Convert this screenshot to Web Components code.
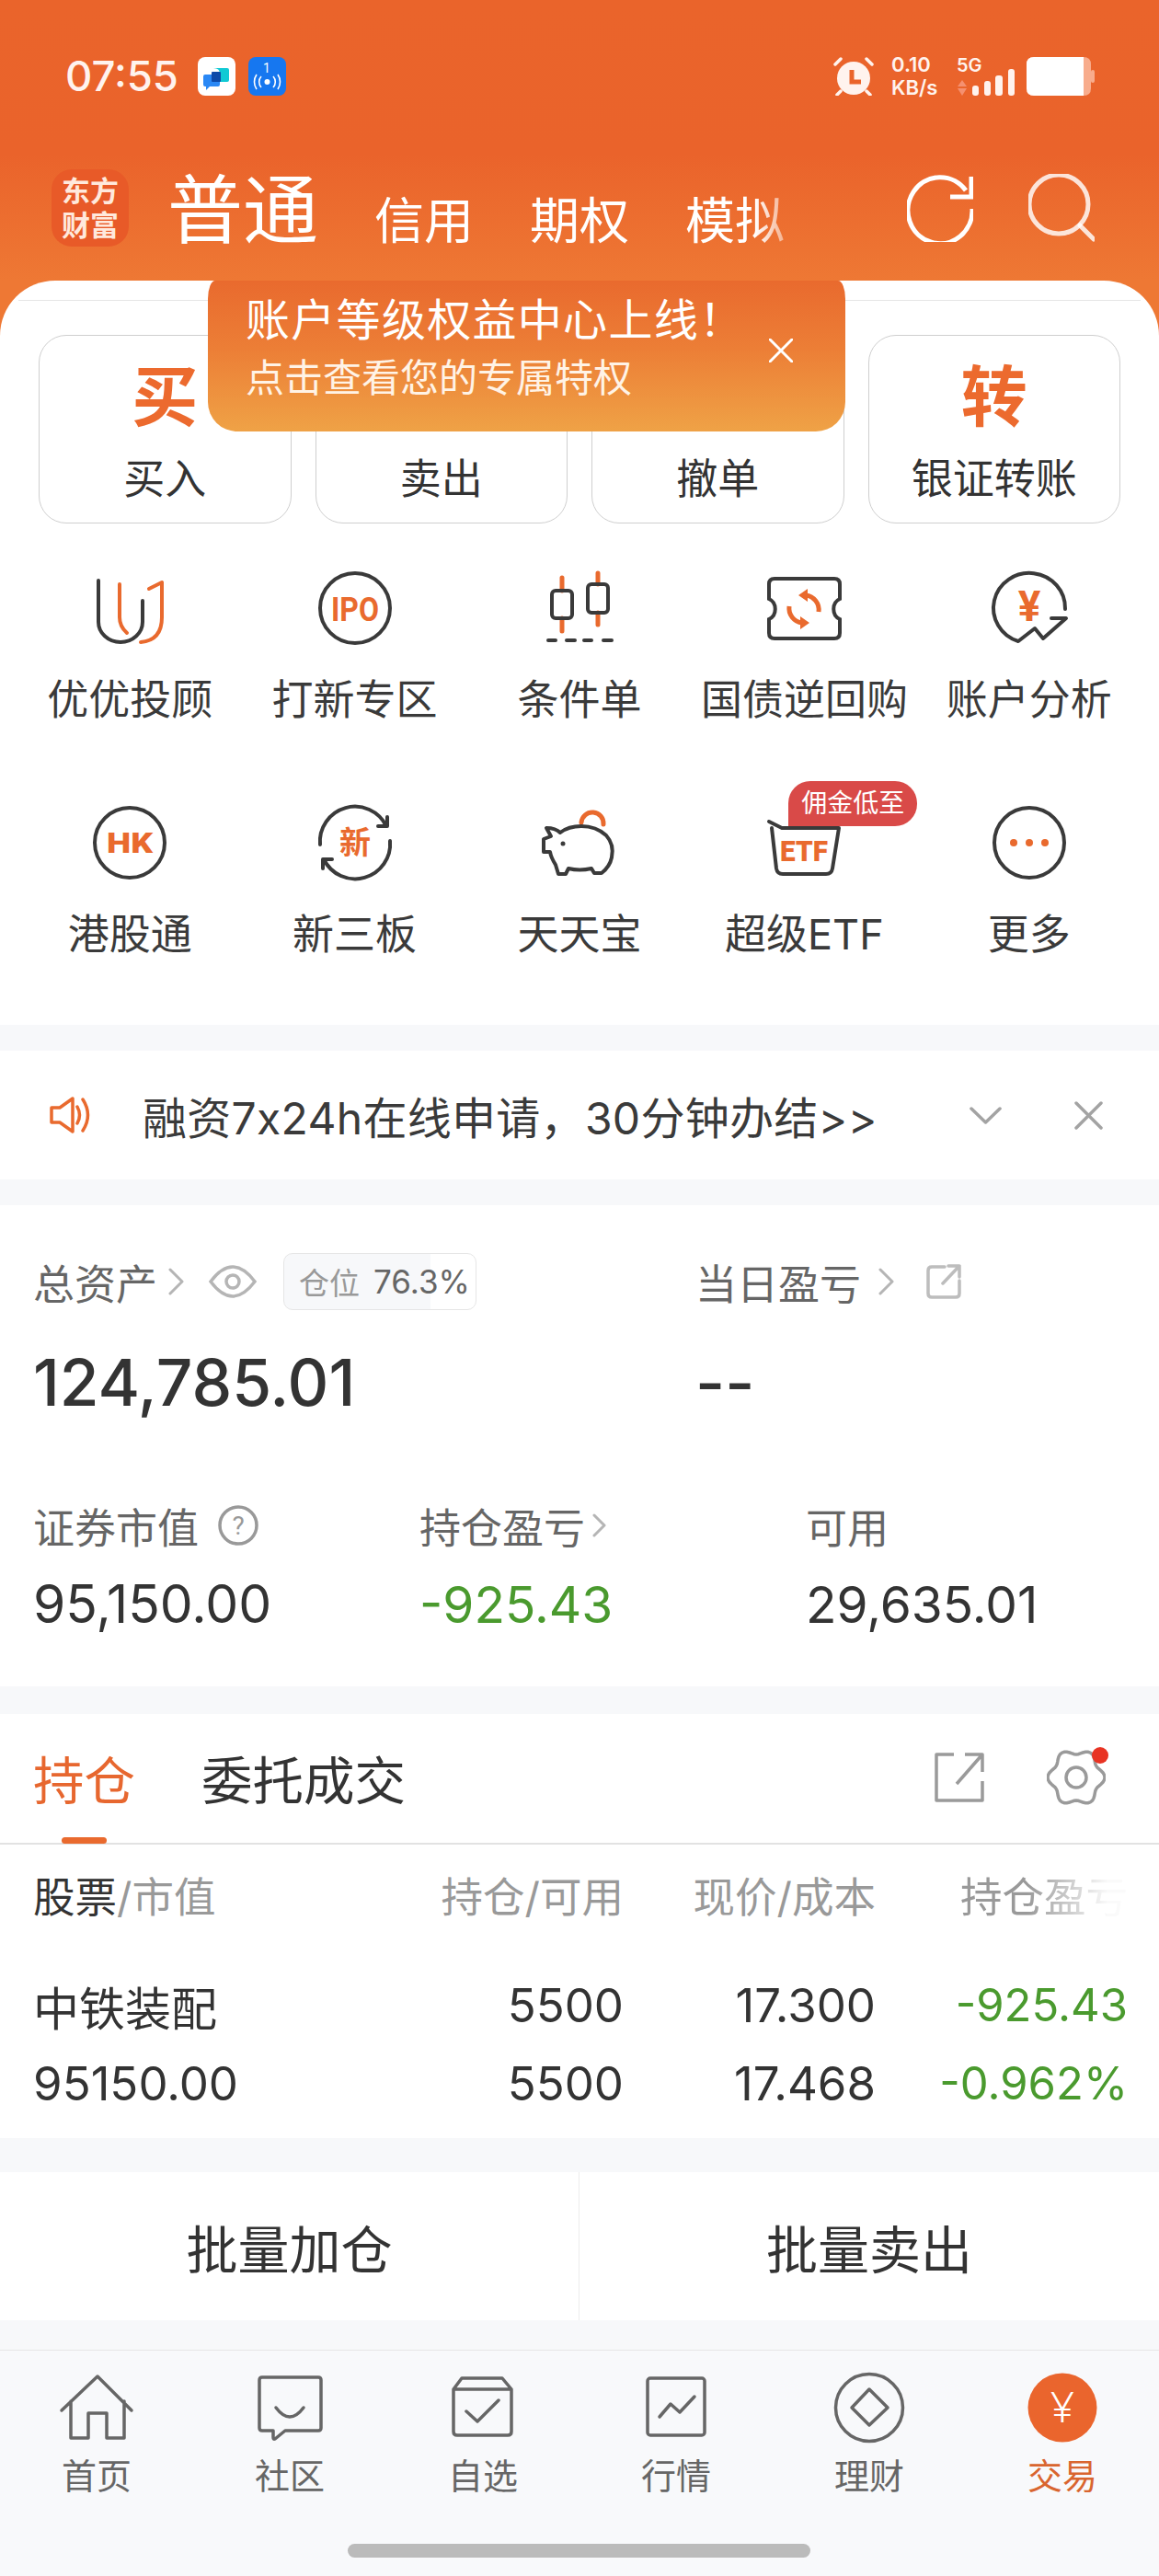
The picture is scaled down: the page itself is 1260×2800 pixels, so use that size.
<!DOCTYPE html>
<html lang="zh-CN">
<head>
<meta charset="utf-8">
<title>交易</title>
<style>
  html, body { margin: 0; padding: 0; }
  body {
    width: 1260px;
    height: 2800px;
    overflow: hidden;
    background: #f7f8fa;
    color: #333;
    font-family: 'Inter', 'Noto Sans CJK SC', sans-serif;
  }
  svg { display: block; overflow: visible; }
</style>
</head>
<body>
<top-bar></top-bar>

<action-section>
  <action-tile big="买" label="买入"></action-tile>
  <action-tile label="卖出"></action-tile>
  <action-tile label="撤单"></action-tile>
  <action-tile big="转" label="银证转账"></action-tile>

  <quick-entry slot="quick" label="优优投顾">
    <svg slot="icon" width="80" height="80" viewBox="0 0 80 80" fill="none" stroke-linecap="round" stroke-width="4">
      <path d="M6 10V55a24 22 0 0 0 48 0V32" stroke="#3a3a3a"/>
      <path d="M29 14V50Q29 60 37 67" stroke="#e96a2e"/>
      <path d="M61 19L75 12V50Q75 75 52 77" stroke="#e96a2e" stroke-linejoin="round"/>
    </svg>
  </quick-entry>
  <quick-entry slot="quick" label="打新专区">
    <svg slot="icon" width="80" height="80" viewBox="0 0 80 80" fill="none">
      <circle cx="40" cy="40" r="38" stroke="#3a3a3a" stroke-width="4"/>
      <text x="14" y="54" font-family="Roboto, sans-serif" font-weight="700" font-size="36" fill="#e96a2e" textLength="52" lengthAdjust="spacingAndGlyphs">IPO</text>
    </svg>
  </quick-entry>
  <quick-entry slot="quick" label="条件单">
    <svg slot="icon" width="80" height="80" viewBox="0 0 80 80" fill="none" stroke-width="4" stroke-linecap="round">
      <path d="M21 7V21M21 51V65M60 2V14M60 45V58" stroke="#e96a2e" stroke-width="5"/>
      <rect x="10" y="21" width="22" height="30" rx="4" stroke="#3a3a3a"/>
      <rect x="49" y="14" width="22" height="31" rx="4" stroke="#3a3a3a"/>
      <path d="M6 75H14M26 75H35M45 75H53M66 75H75" stroke="#3a3a3a"/>
    </svg>
  </quick-entry>
  <quick-entry slot="quick" label="国债逆回购">
    <svg slot="icon" width="80" height="80" viewBox="0 0 80 80" fill="none">
      <path d="M8 8H73Q79 8 79 14V30C70 34 70 48 79 52V67Q79 73 73 73H8Q2 73 2 67V52C11 48 11 34 2 30V14Q2 8 8 8Z" stroke="#3a3a3a" stroke-width="4"/>
      <path d="M42 26A16 16 0 0 1 56 44M38 56A16 16 0 0 1 24 38" stroke="#e96a2e" stroke-width="5"/>
      <path d="M44 19V33L34 26ZM36 49V63L46 56Z" fill="#e96a2e"/>
    </svg>
  </quick-entry>
  <quick-entry slot="quick" label="账户分析">
    <svg slot="icon" width="80" height="80" viewBox="0 0 80 80" fill="none">
      <path d="M79 41A39 38 0 1 0 28 76L46 62L55 73L80 51H64" stroke="#3a3a3a" stroke-width="4" stroke-linejoin="round" stroke-linecap="round"/>
      <text x="40" y="54" text-anchor="middle" font-family="Roboto, sans-serif" font-weight="700" font-size="46" fill="#e96a2e">¥</text>
    </svg>
  </quick-entry>

  <quick-entry slot="quick" label="港股通">
    <svg slot="icon" width="80" height="80" viewBox="0 0 80 80" fill="none">
      <circle cx="40" cy="40" r="38" stroke="#3a3a3a" stroke-width="4"/>
      <text x="15" y="51" font-family="Roboto, sans-serif" font-weight="900" font-size="31" fill="#e96a2e" textLength="50" lengthAdjust="spacingAndGlyphs">HK</text>
    </svg>
  </quick-entry>
  <quick-entry slot="quick" label="新三板">
    <svg slot="icon" width="80" height="80" viewBox="0 0 80 80" fill="none">
      <path d="M2 42A38 38 0 0 1 74 22M78 38A38 38 0 0 1 6 58" stroke="#3a3a3a" stroke-width="4" stroke-linecap="round"/>
      <path d="M65 22H75V12M15 58H5V68" stroke="#3a3a3a" stroke-width="4" stroke-linecap="round" stroke-linejoin="round"/>
      <text x="40" y="52" text-anchor="middle" font-family="'Noto Sans CJK SC', sans-serif" font-weight="700" font-size="34" fill="#e96a2e">新</text>
    </svg>
  </quick-entry>
  <quick-entry slot="quick" label="天天宝">
    <svg slot="icon" width="80" height="80" viewBox="0 0 80 80" fill="none" stroke="#3a3a3a" stroke-width="4" stroke-linejoin="round" stroke-linecap="round">
      <path d="M42 18A12 12 0 0 1 66 20" stroke="#e96a2e" stroke-width="5"/>
      <path d="M4 24Q14 24 19 29Q28 22 42 22Q58 22 69 32Q78 42 75 56Q73 66 64 73H56L53 68Q40 71 28 68L25 74H17L14 64Q9 56 8 50H1V36L9 33Z"/>
      <circle cx="22" cy="41" r="2.5" fill="#3a3a3a" stroke="none"/>
    </svg>
  </quick-entry>
  <quick-entry slot="quick" label="超级ETF">
    <svg slot="icon" width="80" height="80" viewBox="0 0 80 80" fill="none">
      <path d="M2 17L16 24H78L71 68Q70 74 64 74H17Q11 74 10 68L5 24" stroke="#3a3a3a" stroke-width="4" stroke-linejoin="round" stroke-linecap="round"/>
      <text x="14" y="60" font-family="Roboto, sans-serif" font-weight="900" font-size="32" fill="#e96a2e" textLength="52" lengthAdjust="spacingAndGlyphs">ETF</text>
    </svg>
    <span slot="badge">佣金低至</span>
  </quick-entry>
  <quick-entry slot="quick" label="更多">
    <svg slot="icon" width="80" height="80" viewBox="0 0 80 80" fill="none">
      <circle cx="40" cy="40" r="38" stroke="#3a3a3a" stroke-width="4"/>
      <circle cx="23" cy="40" r="4" fill="#e96a2e"/>
      <circle cx="40" cy="40" r="4" fill="#e96a2e"/>
      <circle cx="57" cy="40" r="4" fill="#e96a2e"/>
    </svg>
  </quick-entry>
</action-section>

<notice-bar>融资7x24h在线申请，30分钟办结&gt;&gt;</notice-bar>
<asset-panel></asset-panel>
<holdings-panel></holdings-panel>
<batch-bar></batch-bar>

<bottom-nav>
  <nav-item label="首页">
    <svg width="80" height="76" viewBox="0 0 80 76" fill="none" stroke="#666" stroke-width="3.5" stroke-linejoin="round" stroke-linecap="round">
      <path d="M2 42L41 5L78 42M12 32V72H31V45H51V72H70V32"/>
    </svg>
  </nav-item>
  <nav-item label="社区">
    <svg width="80" height="76" viewBox="0 0 80 76" fill="none" stroke="#666" stroke-width="3.5" stroke-linejoin="round" stroke-linecap="round">
      <path d="M10 6H71Q74 6 74 9V61Q74 64 71 64H35L24 73Q22 74 22 71V64H10Q7 64 7 61V9Q7 6 10 6Z"/>
      <path d="M25 39Q40 59 55 39"/>
    </svg>
  </nav-item>
  <nav-item label="自选">
    <svg width="80" height="76" viewBox="0 0 80 76" fill="none" stroke="#666" stroke-width="3.5" stroke-linejoin="round" stroke-linecap="round">
      <path d="M8 19L17 7H61L71 19V65Q71 69 67 69H12Q8 69 8 65ZM8 19H71"/>
      <path d="M22 43L34 54L57 31"/>
    </svg>
  </nav-item>
  <nav-item label="行情">
    <svg width="80" height="76" viewBox="0 0 80 76" fill="none" stroke="#666" stroke-width="3.5" stroke-linejoin="round" stroke-linecap="round">
      <rect x="9" y="7" width="62" height="62" rx="3"/>
      <path d="M22 49L34 35L44 44L60 27"/>
    </svg>
  </nav-item>
  <nav-item label="理财">
    <svg width="80" height="76" viewBox="0 0 80 76" fill="none" stroke="#666" stroke-width="3.5" stroke-linejoin="round">
      <circle cx="40" cy="39" r="36.5"/>
      <path d="M40 19L60 39L40 58L21 39Z"/>
    </svg>
  </nav-item>
  <nav-item label="交易" active>
    <svg width="80" height="76" viewBox="0 0 80 76">
      <circle cx="40" cy="39" r="37.5" fill="#ea652d"/>
      <text x="40" y="55" text-anchor="middle" font-family="'Noto Sans', sans-serif" font-weight="300" font-size="46" fill="#fff">¥</text>
    </svg>
  </nav-item>
</bottom-nav>

<script>
class TopBar extends HTMLElement {
  constructor() {
    super();
    this.attachShadow({ mode: 'open' });
    this.shadowRoot.innerHTML = `
      <style>
        :host {
          display: block;
          height: 305px;
          background: linear-gradient(#ea642b 0%, #ea632b 55%, #ee7834 100%);
          color: #fff;
        }
        .status {
          display: flex;
          align-items: center;
          height: 42px;
          padding: 62px 70px 0 71px;
        }
        .time { font-size: 45.5px; font-weight: 500; line-height: 42px; width: 144px; color: #fff3ee; }
        .app { width: 41px; height: 42px; margin-right: 14px; }
        .right { margin-left: auto; display: flex; align-items: center; }
        .speed { width: 52px; margin: 0 19px 0 19px; font-size: 22px; font-weight: 600; line-height: 25px; color: #fff3ee; white-space: nowrap; }
        .net { position: relative; width: 64px; height: 42px; }
        .net span { display: block; font-size: 20px; font-weight: 600; line-height: 18px; color: #fff3ee; }
        .net svg { position: absolute; left: 0; top: 0; }
        nav {
          display: flex;
          align-items: flex-end;
          margin-top: 80px;
          padding: 0 70px 0 56px;
          height: 84px;
        }
        .logo {
          width: 84px;
          height: 84px;
          border-radius: 22px;
          background: #e85a28;
          display: flex;
          align-items: center;
          justify-content: center;
          text-align: center;
          font-size: 31px;
          font-weight: 700;
          line-height: 37px;
          color: #ffe9dc;
          margin-right: 42px;
        }
        .main { font-size: 82px; line-height: 96px; margin-right: 61px; position: relative; top: 9px; }
        .tab { font-size: 54px; line-height: 64px; margin-right: 61px; position: relative; top: 5px; white-space: nowrap; }
        .tab.fade { -webkit-mask: linear-gradient(90deg, #000 70%, rgba(0,0,0,.45) 100%); mask: linear-gradient(90deg, #000 70%, rgba(0,0,0,.45) 100%); margin-right: 0; }
        .actions { margin-left: auto; display: flex; gap: 60px; align-self: center; }
      </style>
      <div class="status">
        <span class="time">07:55</span>
        <svg class="app" viewBox="0 0 41 42">
          <rect width="41" height="42" rx="8" fill="#fff"/>
          <path d="M17 12H32Q34 12 34 14V25Q34 27 32 27H24V18Q24 12 17 12Z" fill="#10c9d4"/>
          <path d="M8 19H22Q24 19 24 21V30Q24 32 22 32H13L9 36V32H8Q6 32 6 30V21Q6 19 8 19Z" fill="#2a88f5"/>
          <rect x="15" y="16" width="10" height="11" rx="1" fill="#0d4aa8"/>
        </svg>
        <svg class="app" viewBox="0 0 41 42">
          <rect width="41" height="42" rx="8" fill="#1677f0"/>
          <text x="20" y="17" text-anchor="middle" font-family="Roboto, sans-serif" font-size="14" fill="#fff">1</text>
          <circle cx="20.5" cy="27" r="3" fill="#fff"/>
          <path d="M14 21A9 9 0 0 0 14 33M27 21A9 9 0 0 1 27 33M9 19A14 14 0 0 0 9 35M32 19A14 14 0 0 1 32 35" fill="none" stroke="#fff" stroke-width="1.6"/>
        </svg>
        <div class="right">
          <svg width="44" height="42" viewBox="0 0 44 42">
            <circle cx="22" cy="23" r="18" fill="#fff3ee"/>
            <path d="M20 14V27H30" fill="none" stroke="#ea642b" stroke-width="5"/>
            <path d="M2 8L8 2M36 2L42 8M8 37L4 41M36 37L40 41" stroke="#fff3ee" stroke-width="3.5" stroke-linecap="round"/>
          </svg>
          <div class="speed">0.10<br>KB/s</div>
          <div class="net">
            <span>5G</span>
            <svg width="64" height="42" viewBox="0 0 64 42">
              <path d="M6 25L11 32H1ZM6 42L11 34H1Z" fill="#f59070"/>
              <rect x="17" y="31" width="7" height="11" rx="3" fill="#fff3ee"/>
              <rect x="30" y="26" width="7" height="16" rx="3" fill="#fff3ee"/>
              <rect x="42" y="20" width="8" height="22" rx="3" fill="#fff3ee"/>
              <rect x="56" y="13" width="7" height="29" rx="3" fill="#fff3ee"/>
            </svg>
          </div>
          <svg width="74" height="42" viewBox="0 0 74 42" style="margin-left:12px">
            <path d="M8 0H62Q70 0 70 8V34Q70 42 62 42H8Q0 42 0 34V8Q0 0 8 0Z" fill="#f8ac8c"/>
            <rect x="70" y="14" width="4" height="14" rx="2" fill="#f8ac8c"/>
            <path d="M8 0H62V42H8Q0 42 0 34V8Q0 0 8 0Z" fill="#fff"/>
          </svg>
        </div>
      </div>
      <nav>
        <div class="logo">东方<br>财富</div>
        <span class="main">普通</span>
        <span class="tab">信用</span>
        <span class="tab">期权</span>
        <span class="tab fade">模拟</span>
        <div class="actions">
          <svg width="72" height="74" viewBox="0 0 72 74" fill="none" stroke="#fff" stroke-width="5">
            <path d="M64 18A35 36 0 1 0 71 38"/>
            <path d="M70 3V25H47"/>
          </svg>
          <svg width="72" height="74" viewBox="0 0 72 74" fill="none" stroke="#fff" stroke-opacity=".82" stroke-width="5" stroke-linecap="round">
            <circle cx="33" cy="33" r="32"/>
            <path d="M56 56L71 71"/>
          </svg>
        </div>
      </nav>
    `;
  }
}

class ActionSection extends HTMLElement {
  constructor() {
    super();
    this.attachShadow({ mode: 'open' });
    this.shadowRoot.innerHTML = `
      <style>
        :host { display: block; background: #ee7834; position: relative; }
        .sheet {
          background: #fff;
          border-radius: 60px 60px 0 0;
          height: 809px;
          box-sizing: border-box;
          padding-top: 21px;
        }
        .rule { height: 1px; margin: 0 20px; background: #e6e6e6; }
        .tiles {
          display: grid;
          grid-template-columns: repeat(4, 1fr);
          gap: 26px;
          margin: 37px 42px 0;
        }
        .quick {
          display: grid;
          grid-template-columns: repeat(5, 1fr);
          row-gap: 91px;
          margin: 52px 19px 0;
        }
        .promo {
          position: absolute;
          left: 226px;
          top: 0;
          width: 693px;
          height: 164px;
          box-sizing: border-box;
          padding: 8px 0 0 41px;
          color: #fff;
          border-radius: 8px 8px 32px 32px / 20px 20px 32px 32px;
          background: linear-gradient(#e96a2e 0%, #ec7e36 45%, #efa246 100%);
        }
        .promo b { display: block; font-weight: 400; font-size: 48px; line-height: 69px; letter-spacing: 1.3px; white-space: nowrap; }
        .promo span { display: block; font-size: 42px; line-height: 58px; color: #fff3e6; white-space: nowrap; }
        .promo svg { position: absolute; left: 610px; top: 63px; }
      </style>
      <div class="sheet">
        <div class="rule"></div>
        <div class="tiles"><slot></slot></div>
        <div class="quick"><slot name="quick"></slot></div>
      </div>
      <div class="promo">
        <b>账户等级权益中心上线！</b>
        <span>点击查看您的专属特权</span>
        <svg width="26" height="26" viewBox="0 0 26 26"><path d="M1 1L25 25M25 1L1 25" stroke="#fff" stroke-width="3" stroke-linecap="round"/></svg>
      </div>
    `;
  }
}

class ActionTile extends HTMLElement {
  constructor() {
    super();
    this.attachShadow({ mode: 'open' });
    this.shadowRoot.innerHTML = `
      <style>
        :host {
          display: block;
          height: 205px;
          box-sizing: border-box;
          border: 1.5px solid #cfcfcf;
          border-radius: 30px;
          text-align: center;
        }
        .big { height: 84px; font-size: 72px; font-weight: 700; line-height: 84px; margin-top: 24px; color: #ec6a2e; }
        .label { font-size: 45px; line-height: 54px; margin-top: 21px; color: #333; }
      </style>
      <div class="big"></div>
      <div class="label"></div>
    `;
  }
  connectedCallback() {
    this.shadowRoot.querySelector('.big').textContent = this.getAttribute('big') || '';
    this.shadowRoot.querySelector('.label').textContent = this.getAttribute('label');
  }
}

class QuickEntry extends HTMLElement {
  constructor() {
    super();
    this.attachShadow({ mode: 'open' });
    this.shadowRoot.innerHTML = `
      <style>
        :host { display: block; height: 164px; text-align: center; position: relative; }
        .icon { display: flex; justify-content: center; height: 80px; }
        .label { margin-top: 36px; font-size: 45px; line-height: 48px; color: #3a3a3a; white-space: nowrap; }
        .badge {
          position: absolute;
          left: 105px;
          top: -27px;
          font-size: 28px;
          line-height: 49px;
          height: 49px;
          padding: 0 14px;
          color: #fff;
          background: #d94a48;
          border-radius: 24px 24px 24px 0;
          white-space: nowrap;
        }
        .badge:not(.on) { display: none; }
      </style>
      <div class="icon"><slot name="icon"></slot></div>
      <div class="label"></div>
      <div class="badge"><slot name="badge"></slot></div>
    `;
  }
  connectedCallback() {
    this.shadowRoot.querySelector('.label').textContent = this.getAttribute('label');
    if (this.querySelector('[slot=badge]')) this.shadowRoot.querySelector('.badge').classList.add('on');
  }
}

class NoticeBar extends HTMLElement {
  constructor() {
    super();
    this.attachShadow({ mode: 'open' });
    this.shadowRoot.innerHTML = `
      <style>
        :host {
          display: flex;
          align-items: center;
          height: 140px;
          margin-top: 28px;
          background: #fff;
          padding-left: 54px;
          font-size: 48px;
          letter-spacing: .3px;
          color: #3a3a3a;
        }
        .text { margin-left: 55px; white-space: nowrap; }
        .ctl { margin-left: auto; display: flex; align-items: center; gap: 79px; padding-right: 61px; }
      </style>
      <svg width="46" height="40" viewBox="0 0 46 40" fill="none" stroke="#e96a2e" stroke-width="3.5" stroke-linejoin="round" stroke-linecap="round">
        <path d="M2 12H11L25 2V38L11 28H2Z"/>
        <path d="M30 11Q35 20 30 29M36 3Q47 20 36 37"/>
      </svg>
      <span class="text"><slot></slot></span>
      <div class="ctl">
        <svg width="35" height="19" viewBox="0 0 35 19" fill="none" stroke="#a3a3a3" stroke-width="3.5" stroke-linecap="round" stroke-linejoin="round"><path d="M2 2L17.5 17L33 2"/></svg>
        <svg width="31" height="31" viewBox="0 0 31 31" fill="none" stroke="#a3a3a3" stroke-width="3.5" stroke-linecap="round"><path d="M2 2L29 29M29 2L2 29"/></svg>
      </div>
    `;
  }
}

class AssetPanel extends HTMLElement {
  constructor() {
    super();
    this.attachShadow({ mode: 'open' });
    const chev = `<svg class="chev" width="17" height="30" viewBox="0 0 17 30" fill="none" stroke="#b5b5b5" stroke-width="3" stroke-linecap="round" stroke-linejoin="round"><path d="M2 2L15 15L2 28"/></svg>`;
    this.shadowRoot.innerHTML = `
      <style>
        :host {
          display: block;
          height: 523px;
          box-sizing: border-box;
          margin-top: 28px;
          padding: 52px 0 0 36px;
          background: #fff;
        }
        .row { display: flex; align-items: center; height: 62px; }
        .lab { font-size: 45px; color: #666; white-space: nowrap; }
        .chev { margin-left: 12px; }
        .left { width: 720px; display: flex; align-items: center; }
        .right { display: flex; align-items: center; }
        .right .chev { margin-left: 19px; }
        .eye { margin-left: 27px; }
        .pos {
          margin-left: 29px;
          width: 210px;
          height: 62px;
          box-sizing: border-box;
          border: 1px solid #e6e6e6;
          border-radius: 10px;
          padding-left: 16px;
          background: linear-gradient(90deg, #f7f8fa 76.3%, #fff 76.3%);
          display: flex;
          align-items: center;
          gap: 15px;
          white-space: nowrap;
        }
        .pos i { font-style: normal; font-size: 33px; color: #999; }
        .pos em { font-style: normal; font-size: 35px; color: #666; }
        .bigs { display: flex; margin-top: 34px; height: 90px; align-items: center; font-size: 69.5px; font-weight: 500; color: #333; }
        .bigs span:first-child { width: 720px; }
        .grid { display: grid; grid-template-columns: 420px 420px 420px; margin-top: 80px; }
        .grid .lab { display: flex; align-items: center; height: 60px; }
        .val { font-size: 55px; line-height: 80px; margin-top: 16px; color: #333; }
        .val.wide { font-size: 57px; }
        .val.down { color: #4a9a2e; }
      </style>
      <div class="row">
        <div class="left">
          <span class="lab">总资产</span>${chev}
          <svg class="eye" width="52" height="36" viewBox="0 0 52 36" fill="none" stroke="#b5b5b5" stroke-width="3.5"><path d="M2 18Q14 2 26 2T50 18Q38 34 26 34T2 18Z"/><circle cx="26" cy="18" r="7"/></svg>
          <div class="pos"><i>仓位</i><em>76.3%</em></div>
        </div>
        <div class="right">
          <span class="lab">当日盈亏</span>${chev}
          <svg style="margin-left:35px" width="38" height="38" viewBox="0 0 38 38" fill="none" stroke="#bdbdbd" stroke-width="3.5" stroke-linecap="round" stroke-linejoin="round"><path d="M20 3H6Q2 3 2 7V32Q2 36 6 36H32Q36 36 36 32V18M18 21L36 2M24 2H36V14"/></svg>
        </div>
      </div>
      <div class="bigs"><span>124,785.01</span><span>--</span></div>
      <div class="grid">
        <div>
          <div class="lab">证券市值<svg style="margin-left:21px" width="44" height="44" viewBox="0 0 44 44"><circle cx="22" cy="22" r="20" fill="none" stroke="#999" stroke-width="3.5"/><text x="22" y="32" text-anchor="middle" font-family="Roboto, sans-serif" font-size="28" fill="#999">?</text></svg></div>
          <div class="val wide">95,150.00</div>
        </div>
        <div>
          <div class="lab">持仓盈亏<svg style="margin-left:8px" width="15" height="26" viewBox="0 0 15 26" fill="none" stroke="#b5b5b5" stroke-width="3" stroke-linecap="round" stroke-linejoin="round"><path d="M2 2L13 13L2 24"/></svg></div>
          <div class="val down">-925.43</div>
        </div>
        <div>
          <div class="lab">可用</div>
          <div class="val">29,635.01</div>
        </div>
      </div>
    `;
  }
}

class HoldingsPanel extends HTMLElement {
  constructor() {
    super();
    this.attachShadow({ mode: 'open' });
    let gear = '';
    for (let a = 0; a < 360; a += 5) {
      const t = a * Math.PI / 180;
      const r = 28 + 3 * Math.cos(6 * t);
      gear += (a ? 'L' : 'M') + (32 + r * Math.cos(t)).toFixed(1) + ' ' + (32 + r * Math.sin(t)).toFixed(1);
    }
    this.shadowRoot.innerHTML = `
      <style>
        :host {
          display: block;
          height: 461px;
          margin-top: 30px;
          background: #fff;
        }
        .tabs {
          display: flex;
          align-items: center;
          height: 142px;
          box-sizing: border-box;
          padding: 0 58px 2px 36px;
          border-bottom: 2px solid #e2e2e2;
          position: relative;
          font-size: 55.5px;
          color: #333;
        }
        .tabs .on { color: #e7672f; margin-right: 72px; }
        .tabs .bar {
          position: absolute;
          left: 67px;
          bottom: -1px;
          width: 49px;
          height: 7px;
          border-radius: 4px;
          background: #e96a2e;
        }
        .tools { margin-left: auto; display: flex; align-items: center; gap: 68px; position: relative; }
        .dot { position: absolute; right: -3px; top: -1px; width: 18px; height: 18px; border-radius: 50%; background: #e83323; }
        .grid {
          display: grid;
          grid-template-columns: 300px 342px 274px 274px;
          padding-left: 36px;
          align-items: center;
        }
        .head { height: 108px; font-size: 45.5px; color: #999; }
        .head b { font-weight: 400; color: #333; }
        .r { text-align: right; white-space: nowrap; }
        .fade { -webkit-mask: linear-gradient(90deg, #000 60%, rgba(0,0,0,.05) 92%); mask: linear-gradient(90deg, #000 60%, rgba(0,0,0,.05) 92%); }
        .line { height: 85px; font-size: 51px; color: #333; }
        .line .name { font-size: 50px; }
        .line .green { font-size: 49px; color: #4a9a2e; }
      </style>
      <div class="tabs">
        <span class="on">持仓</span><span>委托成交</span><i class="bar"></i>
        <div class="tools">
          <svg width="54" height="54" viewBox="0 0 54 54" fill="none" stroke="#9a9a9a" stroke-width="3.5" stroke-linejoin="round"><path d="M21 2H2V52H52V31"/><path d="M24 34L52 2M33 2H52V21"/></svg>
          <svg width="64" height="64" viewBox="0 0 64 64" fill="none" stroke="#9a9a9a" stroke-width="3.5"><path d="${gear}Z"/><ellipse cx="32" cy="32" rx="11" ry="11"/></svg>
          <i class="dot"></i>
        </div>
      </div>
      <div class="grid head">
        <span><b>股票</b>/市值</span>
        <span class="r">持仓/可用</span>
        <span class="r">现价/成本</span>
        <span class="r fade">持仓盈亏</span>
      </div>
      <div class="grid line" style="margin-top:24px">
        <span class="name">中铁装配</span><span class="r">5500</span><span class="r">17.300</span><span class="r green">-925.43</span>
      </div>
      <div class="grid line">
        <span>95150.00</span><span class="r">5500</span><span class="r">17.468</span><span class="r green">-0.962%</span>
      </div>
    `;
  }
}

class BatchBar extends HTMLElement {
  constructor() {
    super();
    this.attachShadow({ mode: 'open' });
    this.shadowRoot.innerHTML = `
      <style>
        :host {
          display: grid;
          grid-template-columns: 629px 631px;
          height: 161px;
          margin-top: 37px;
          background: #fff;
          font-size: 56px;
          color: #333;
        }
        span { display: flex; align-items: center; justify-content: center; }
        span + span { border-left: 1px solid #ececec; }
      </style>
      <span>批量加仓</span><span>批量卖出</span>
    `;
  }
}

class BottomNav extends HTMLElement {
  constructor() {
    super();
    this.attachShadow({ mode: 'open' });
    this.shadowRoot.innerHTML = `
      <style>
        :host {
          display: block;
          height: 246px;
          box-sizing: border-box;
          margin-top: 32px;
          padding-top: 23px;
          background: #f8f9fb;
          border-top: 1px solid #e6e6e6;
        }
        .items { display: grid; grid-template-columns: repeat(6, 210px); }
        .home { width: 503px; height: 15px; border-radius: 8px; background: #bbb; margin: 51px 0 0 378px; }
      </style>
      <div class="items"><slot></slot></div>
      <div class="home"></div>
    `;
  }
}

class NavItem extends HTMLElement {
  constructor() {
    super();
    this.attachShadow({ mode: 'open' });
    this.shadowRoot.innerHTML = `
      <style>
        :host { display: flex; flex-direction: column; align-items: center; color: #666; }
        :host([active]) { color: #d9652f; }
        .label { font-size: 38px; line-height: 46px; margin-top: 14px; }
      </style>
      <slot></slot>
      <div class="label"></div>
    `;
  }
  connectedCallback() {
    this.shadowRoot.querySelector('.label').textContent = this.getAttribute('label');
  }
}

customElements.define('top-bar', TopBar);
customElements.define('action-section', ActionSection);
customElements.define('action-tile', ActionTile);
customElements.define('quick-entry', QuickEntry);
customElements.define('notice-bar', NoticeBar);
customElements.define('asset-panel', AssetPanel);
customElements.define('holdings-panel', HoldingsPanel);
customElements.define('batch-bar', BatchBar);
customElements.define('bottom-nav', BottomNav);
customElements.define('nav-item', NavItem);
</script>
</body>
</html>
